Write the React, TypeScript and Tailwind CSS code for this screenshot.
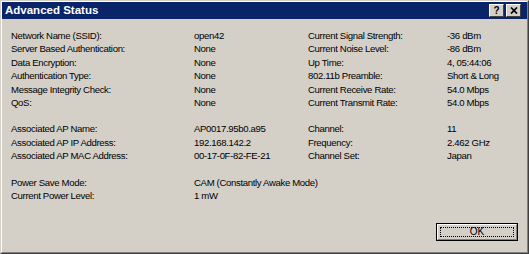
import React from "react";

type Row = [string, string, string?, string?];

const group1: Row[] = [
  ["Network Name (SSID):", "open42", "Current Signal Strength:", "-36 dBm"],
  ["Server Based Authentication:", "None", "Current Noise Level:", "-86 dBm"],
  ["Data Encryption:", "None", "Up Time:", "4, 05:44:06"],
  ["Authentication Type:", "None", "802.11b Preamble:", "Short & Long"],
  ["Message Integrity Check:", "None", "Current Receive Rate:", "54.0 Mbps"],
  ["QoS:", "None", "Current Transmit Rate:", "54.0 Mbps"],
];

const group2: Row[] = [
  ["Associated AP Name:", "AP0017.95b0.a95", "Channel:", "11"],
  ["Associated AP IP Address:", "192.168.142.2", "Frequency:", "2.462 GHz"],
  ["Associated AP MAC Address:", "00-17-0F-82-FE-21", "Channel Set:", "Japan"],
];

const group3: Row[] = [
  ["Power Save Mode:", "CAM (Constantly Awake Mode)"],
  ["Current Power Level:", "1 mW"],
];

function Group({ rows }: { rows: Row[] }) {
  return (
    <div className="grid grid-cols-[183px_114px_139px_1fr]">
      {rows.map((r, i) => (
        <React.Fragment key={i}>
          <div className="h-[13.4px] leading-[13.4px] whitespace-nowrap">{r[0]}</div>
          <div className="h-[13.4px] leading-[13.4px] whitespace-nowrap">{r[1]}</div>
          <div className="h-[13.4px] leading-[13.4px] whitespace-nowrap">{r[2] ?? ""}</div>
          <div className="h-[13.4px] leading-[13.4px] whitespace-nowrap">{r[3] ?? ""}</div>
        </React.Fragment>
      ))}
    </div>
  );
}

function CapButton({ children }: { children: React.ReactNode }) {
  return (
    <div className="w-[15px] h-[13px] bg-[#d4d0c8] border border-t-white border-l-white border-r-[#404040] border-b-[#404040] flex items-center justify-center">
      {children}
    </div>
  );
}

export default function App() {
  return (
    <div
      className="w-[529px] h-[254px] bg-[#d4d0c8] border border-t-[#d4d0c8] border-l-[#d4d0c8] border-r-[#404040] border-b-[#404040] text-black"
      style={{ fontFamily: '"Liberation Sans", Arial, sans-serif' }}
    >
      <div className="h-full border border-t-white border-l-white border-r-[#808080] border-b-[#808080] flex flex-col">
        <div className="h-[17px] bg-[#0a246a] flex items-center pl-[3px] pr-[6px]">
          <span className="text-white font-bold text-[11.5px] leading-none">
            Advanced Status
          </span>
          <div className="ml-auto flex gap-[2px]">
            <CapButton>
              <span className="text-[10px] font-bold leading-none text-black">?</span>
            </CapButton>
            <CapButton>
              <svg width="8" height="7" viewBox="0 0 8 7">
                <path d="M1 0.5 L7 6.5 M7 0.5 L1 6.5" stroke="#000" strokeWidth="1.7" />
              </svg>
            </CapButton>
          </div>
        </div>
        <div className="flex-1 flex flex-col pl-[9px] pt-[10px] text-[9.6px] tracking-[-0.35px]">
          <Group rows={group1} />
          <div className="h-[13px]" />
          <Group rows={group2} />
          <div className="h-[13px]" />
          <Group rows={group3} />
          <div className="mt-auto mb-[11px] mr-[9px] flex justify-end">
            <div className="w-[82px] h-[18px] border border-black">
              <div className="h-full border border-t-white border-l-white border-r-[#808080] border-b-[#808080] p-[2px]">
                <div className="h-full border border-dotted border-black flex items-center justify-center text-[10px] tracking-normal leading-none">
                  OK
                </div>
              </div>
            </div>
          </div>
        </div>
      </div>
    </div>
  );
}
